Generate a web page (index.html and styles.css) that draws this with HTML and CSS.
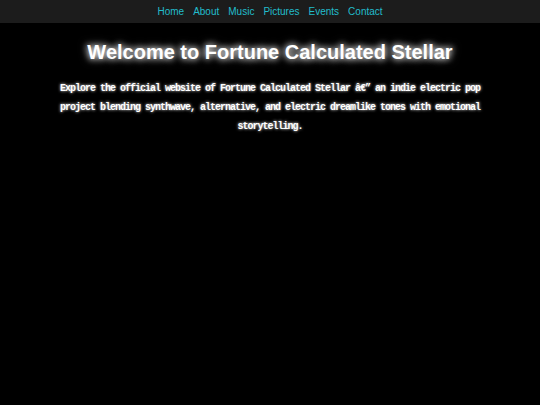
FILE: index.html
```
<!DOCTYPE html>
<html lang="en">
<head>
<meta charset="utf-8">
<title>Fortune Calculated Stellar</title>
<link rel="stylesheet" href="styles.css">
</head>
<body>
<nav class="nav">
  <a href="#">Home</a>
  <a href="#">About</a>
  <a href="#">Music</a>
  <a href="#">Pictures</a>
  <a href="#">Events</a>
  <a href="#">Contact</a>
</nav>
<main class="hero">
  <h1 class="title">Welcome to Fortune Calculated Stellar</h1>
  <p class="intro">Explore the official website of Fortune Calculated Stellar â€” an indie electric pop project blending synthwave, alternative, and electric dreamlike tones with emotional storytelling.</p>
</main>
</body>
</html>
```
FILE: styles.css
```
html, body {
  margin: 0;
  padding: 0;
  background: #000;
  height: 100%;
}
body {
  font-family: "Liberation Sans", Arial, sans-serif;
  color: #fff;
}
.nav {
  background: #1c1c1c;
  height: 23px;
  display: flex;
  justify-content: center;
  align-items: center;
  gap: 9px;
}
.nav a {
  color: #22bccc;
  text-decoration: none;
  font-size: 10px;
}
.hero {
  text-align: center;
  padding: 18px 50px 0;
}
.title {
  margin: 0;
  font-size: 20px;
  font-weight: bold;
  text-shadow: 0 0 6px #fff, 0 0 10px rgba(255,255,255,0.6);
}
.intro {
  margin: 15px auto 0;
  font-family: "Liberation Mono", "DejaVu Sans Mono", monospace;
  font-weight: bold;
  font-size: 10px;
  letter-spacing: -1px;
  line-height: 19px;
  max-width: 440px;
  text-shadow: 0 0 3px #fff;
}
```
